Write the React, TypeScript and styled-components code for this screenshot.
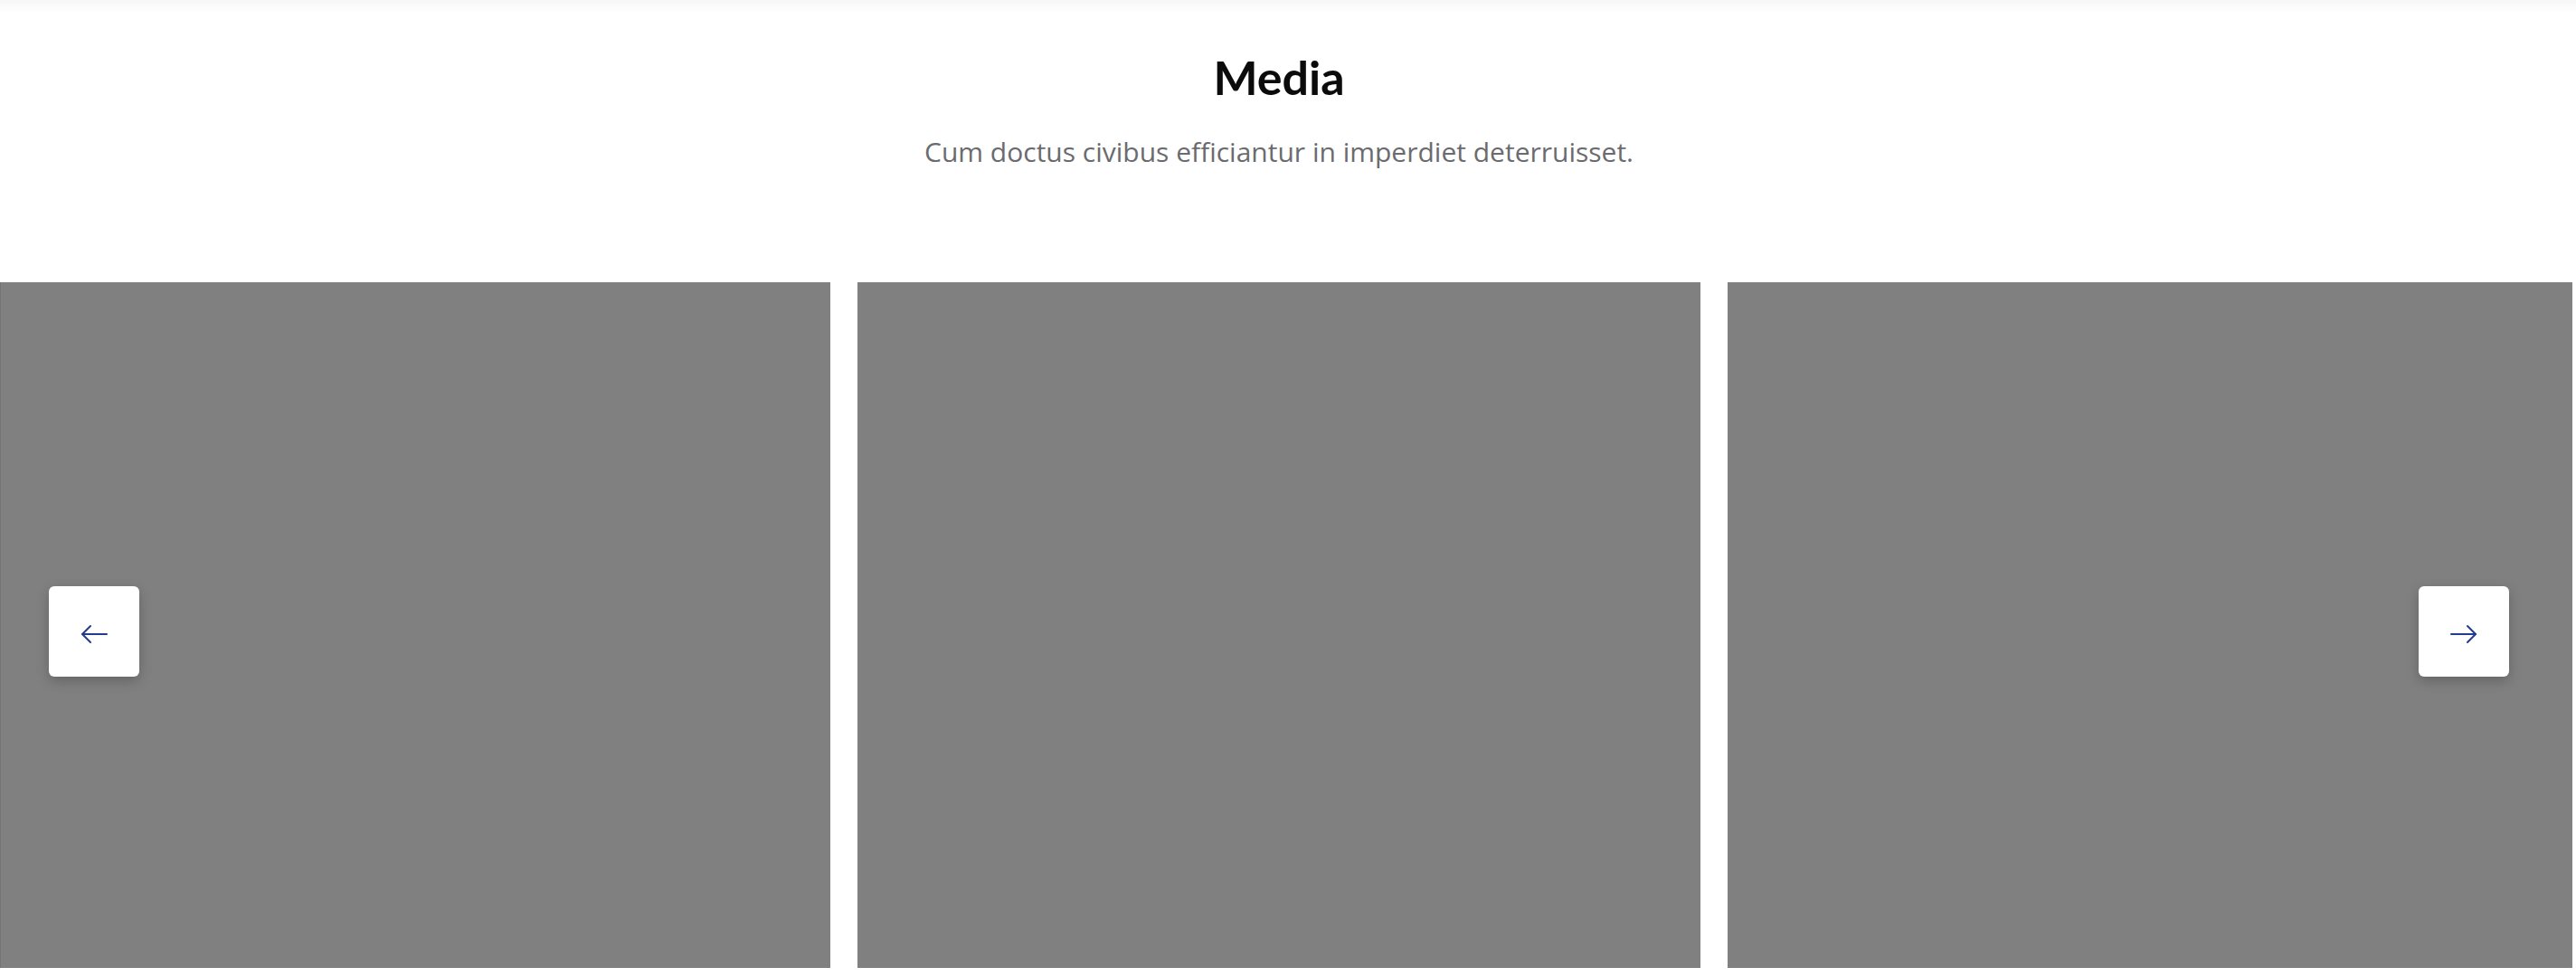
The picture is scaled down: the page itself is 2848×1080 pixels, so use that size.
import React from "react";
import styled, { createGlobalStyle } from "styled-components";

const Global = createGlobalStyle`
  html, body { margin: 0; padding: 0; background: #ffffff; }
  #root { width: 2848px; height: 1080px; overflow: hidden; }
`;

const Page = styled.div`
  width: 2848px;
  height: 1080px;
  background: #ffffff;
  display: flex;
  flex-direction: column;
`;

const TopShade = styled.div`
  height: 14px;
  background: linear-gradient(to bottom, #f6f6f6, #ffffff);
`;

const Intro = styled.header`
  width: 2828px;
  display: flex;
  flex-direction: column;
  align-items: center;
  padding-top: 40px;
`;

const Title = styled.h2`
  margin: 0;
  font-family: Lato, "Noto Sans", sans-serif;
  font-weight: 700;
  font-size: 52px;
  line-height: 62px;
  color: #0b0b0b;
`;

const Subtitle = styled.p`
  margin: 32px 0 0;
  font-family: "Open Sans", "Noto Sans", sans-serif;
  font-size: 30px;
  line-height: 40px;
  color: #6b6b6f;
`;

const Carousel = styled.section`
  position: relative;
  margin-top: 124px;
  height: 758px;
`;

const Track = styled.div`
  display: grid;
  grid-template-columns: 918px 932px 934px;
  column-gap: 30px;
  height: 100%;
`;

const Slide = styled.div<{ $edge?: boolean }>`
  background: #808080;
  box-shadow: ${(p) => (p.$edge ? "inset 1px 0 0 #747474" : "none")};
`;

const NavButton = styled.button<{ $side: "left" | "right" }>`
  position: absolute;
  top: 336px;
  ${(p) => (p.$side === "left" ? "left: 54px;" : "left: 2674px;")}
  width: 100px;
  height: 100px;
  border: 0;
  padding: 6px 0 0;
  border-radius: 6px;
  background: #ffffff;
  box-shadow: 0 5px 14px rgba(0, 0, 0, 0.22);
  display: flex;
  align-items: center;
  justify-content: center;
  cursor: pointer;
`;

const Arrow = ({ dir }: { dir: "left" | "right" }) => (
  <svg
    width="30"
    height="22"
    viewBox="0 0 30 22"
    fill="none"
    stroke="#243c8f"
    strokeWidth="2"
    strokeLinecap="round"
    strokeLinejoin="round"
    style={dir === "right" ? { transform: "scaleX(-1)" } : undefined}
  >
    <path d="M29 11H2" />
    <path d="M11 2L2 11L11 20" />
  </svg>
);

export default function App() {
  return (
    <>
      <Global />
      <Page>
        <TopShade />
        <Intro>
          <Title>Media</Title>
          <Subtitle>Cum doctus civibus efficiantur in imperdiet deterruisset.</Subtitle>
        </Intro>
        <Carousel>
          <Track>
            <Slide $edge />
            <Slide />
            <Slide />
          </Track>
          <NavButton $side="left" aria-label="Previous">
            <Arrow dir="left" />
          </NavButton>
          <NavButton $side="right" aria-label="Next">
            <Arrow dir="right" />
          </NavButton>
        </Carousel>
      </Page>
    </>
  );
}
